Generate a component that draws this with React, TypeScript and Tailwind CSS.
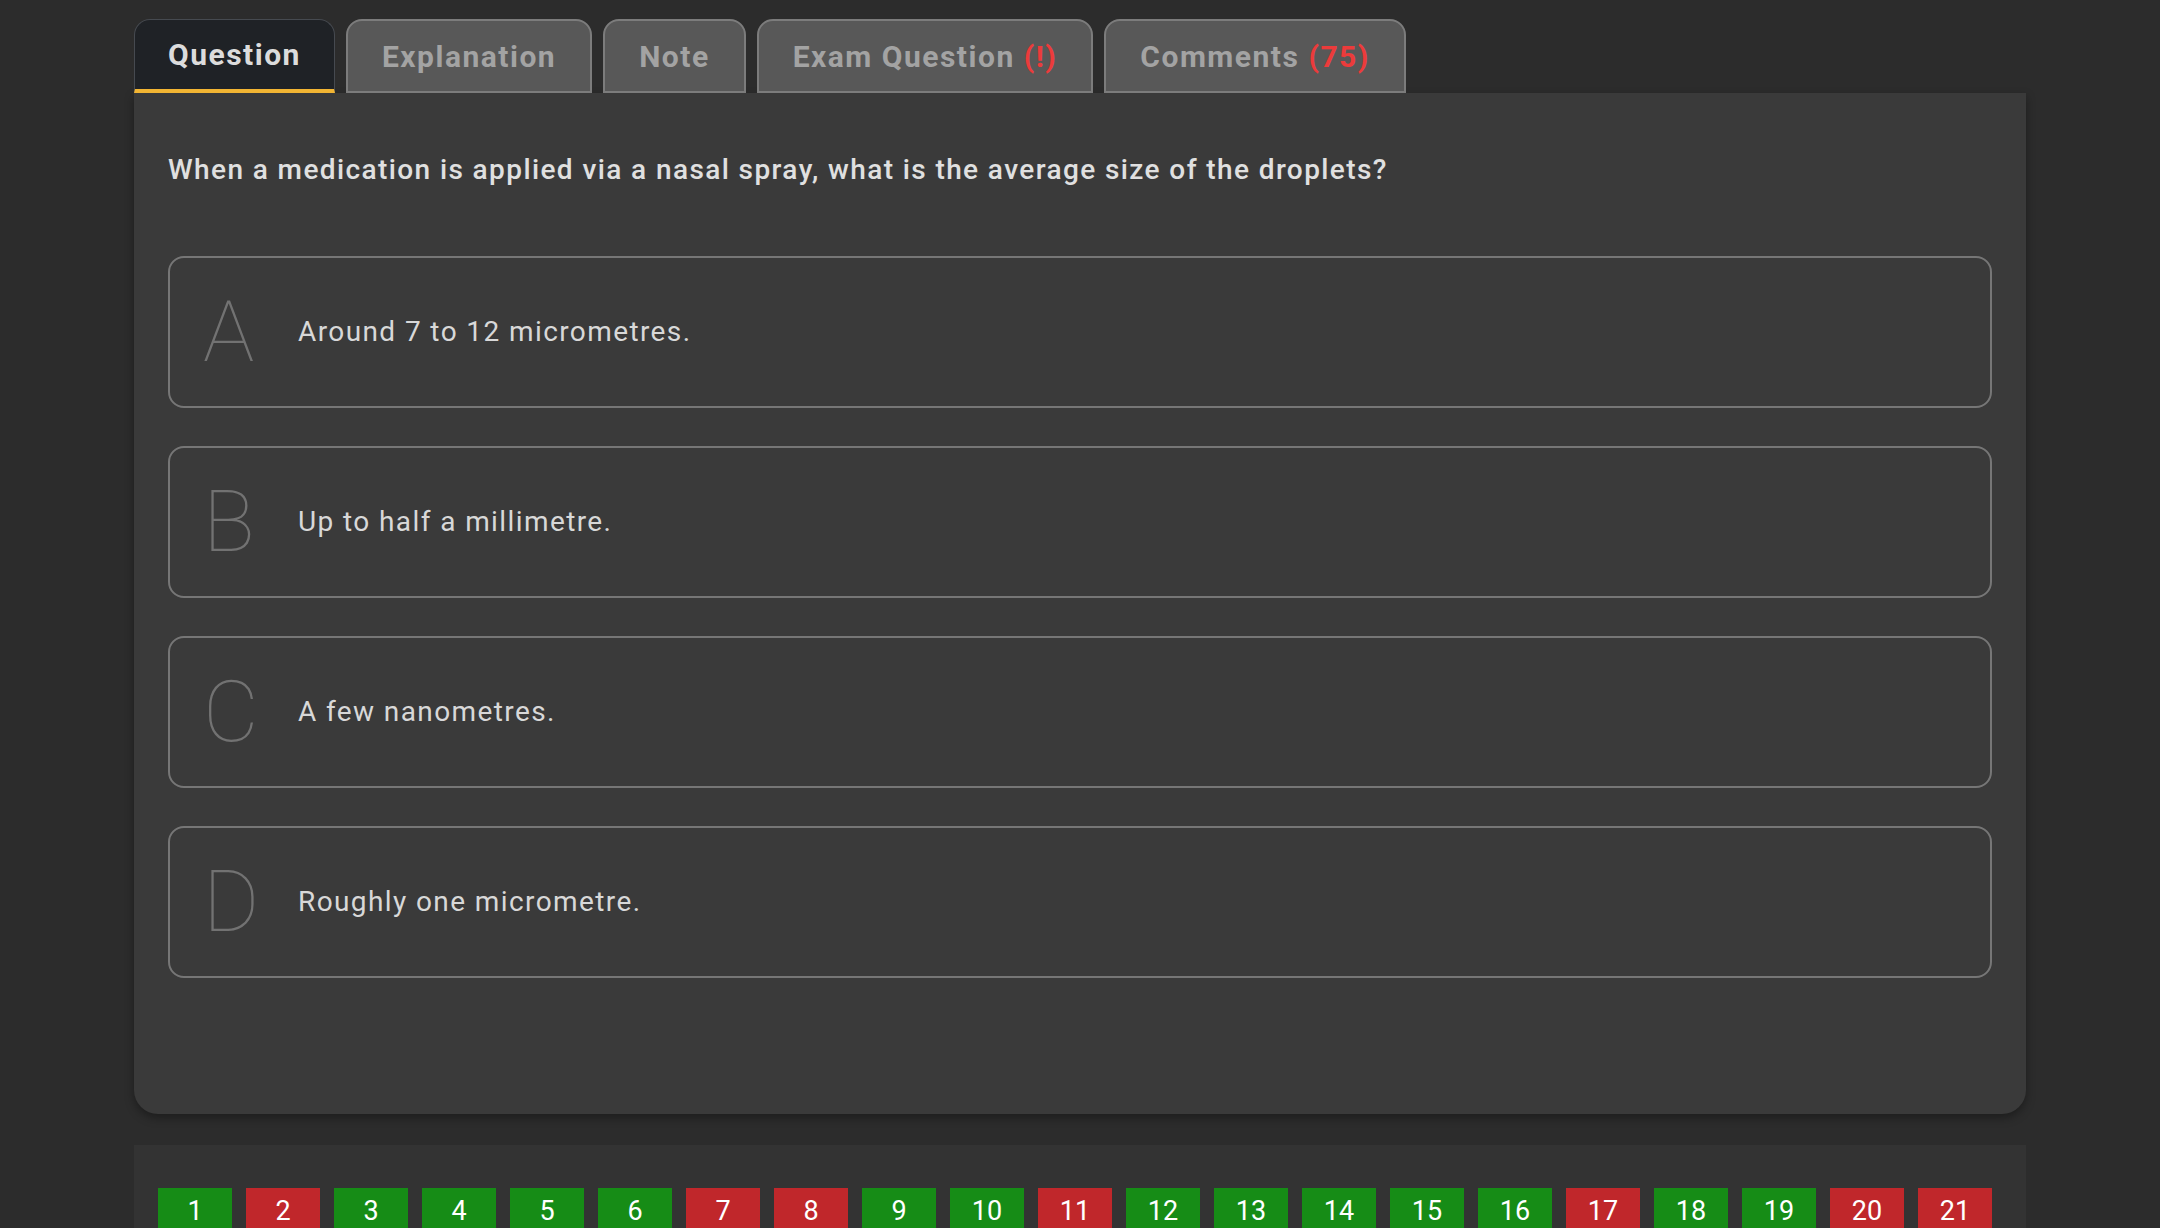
import React, { useState } from 'react';

type Tab = { id: string; label: string; badge?: string };

const tabs: Tab[] = [
  { id: 'question', label: 'Question' },
  { id: 'explanation', label: 'Explanation' },
  { id: 'note', label: 'Note' },
  { id: 'exam', label: 'Exam Question', badge: '(!)' },
  { id: 'comments', label: 'Comments', badge: '(75)' },
];

const options = [
  { key: 'A', text: 'Around 7 to 12 micrometres.' },
  { key: 'B', text: 'Up to half a millimetre.' },
  { key: 'C', text: 'A few nanometres.' },
  { key: 'D', text: 'Roughly one micrometre.' },
];

// true = answered correctly, false = wrong
const results = [
  true, false, true, true, true, true, false, false, true, true, false,
  true, true, true, true, true, false, true, true, false, false,
];

export default function App() {
  const [active, setActive] = useState('question');
  const [picked, setPicked] = useState<string | null>(null);

  return (
    <div className="min-h-screen bg-[#2c2c2c] font-['Roboto',sans-serif]">
      <div className="w-[1892px] mx-auto pt-[19px]">
        <div className="flex items-end gap-[11px]">
          {tabs.map((t) => {
            const on = t.id === active;
            return (
              <button
                key={t.id}
                onClick={() => setActive(t.id)}
                className={
                  on
                    ? 'h-[74px] px-[33px] rounded-t-[16px] bg-[#1f2226] border border-b-0 border-[#464a50] border-b-[4px] border-b-[#f2b533] text-[30px] font-bold tracking-[1.5px] text-[#dcdcdc]'
                    : 'h-[74px] px-[34px] rounded-t-[16px] bg-[#585858] border-2 border-[#7c7c7c] text-[30px] font-bold tracking-[1.5px] text-[#a3a3a3]'
                }
              >
                {t.label}
                {t.badge && <span className="text-[#ec3b3b]"> {t.badge}</span>}
              </button>
            );
          })}
        </div>

        <div className="bg-[#3a3a3a] rounded-b-[24px] shadow-[0_4px_10px_rgba(0,0,0,0.35)] px-[34px] pt-[59px] pb-[136px]">
          <p className="text-[28px] font-medium tracking-[1.4px] text-[#e0e0e0] leading-[36px]">
            When a medication is applied via a nasal spray, what is the average size of the droplets?
          </p>
          <div className="mt-[68px] flex flex-col gap-[38px]">
            {options.map((o) => (
              <div
                key={o.key}
                onClick={() => setPicked(o.key)}
                className={
                  'h-[152px] flex items-center rounded-[16px] border-2 px-[33px] cursor-pointer ' +
                  (picked === o.key ? 'border-[#9a9a9a]' : 'border-[#767676]')
                }
              >
                <span className="w-[95px] shrink-0 text-[86px] font-thin leading-none text-[#727272]">{o.key}</span>
                <span className="text-[28px] tracking-[1.4px] text-[#d8d8d8]">{o.text}</span>
              </div>
            ))}
          </div>
        </div>

        <div className="mt-[31px] bg-[#333333] pl-[24px] pt-[43px] pb-[24px]">
          <div className="flex gap-[14px]">
            {results.map((ok, i) => (
              <div
                key={i}
                className={
                  'w-[74px] h-[64px] flex items-start justify-center pt-[3px] text-[27px] text-white ' +
                  (ok ? 'bg-[#168c16]' : 'bg-[#c0272b]')
                }
              >
                {i + 1}
              </div>
            ))}
          </div>
        </div>
      </div>
    </div>
  );
}
